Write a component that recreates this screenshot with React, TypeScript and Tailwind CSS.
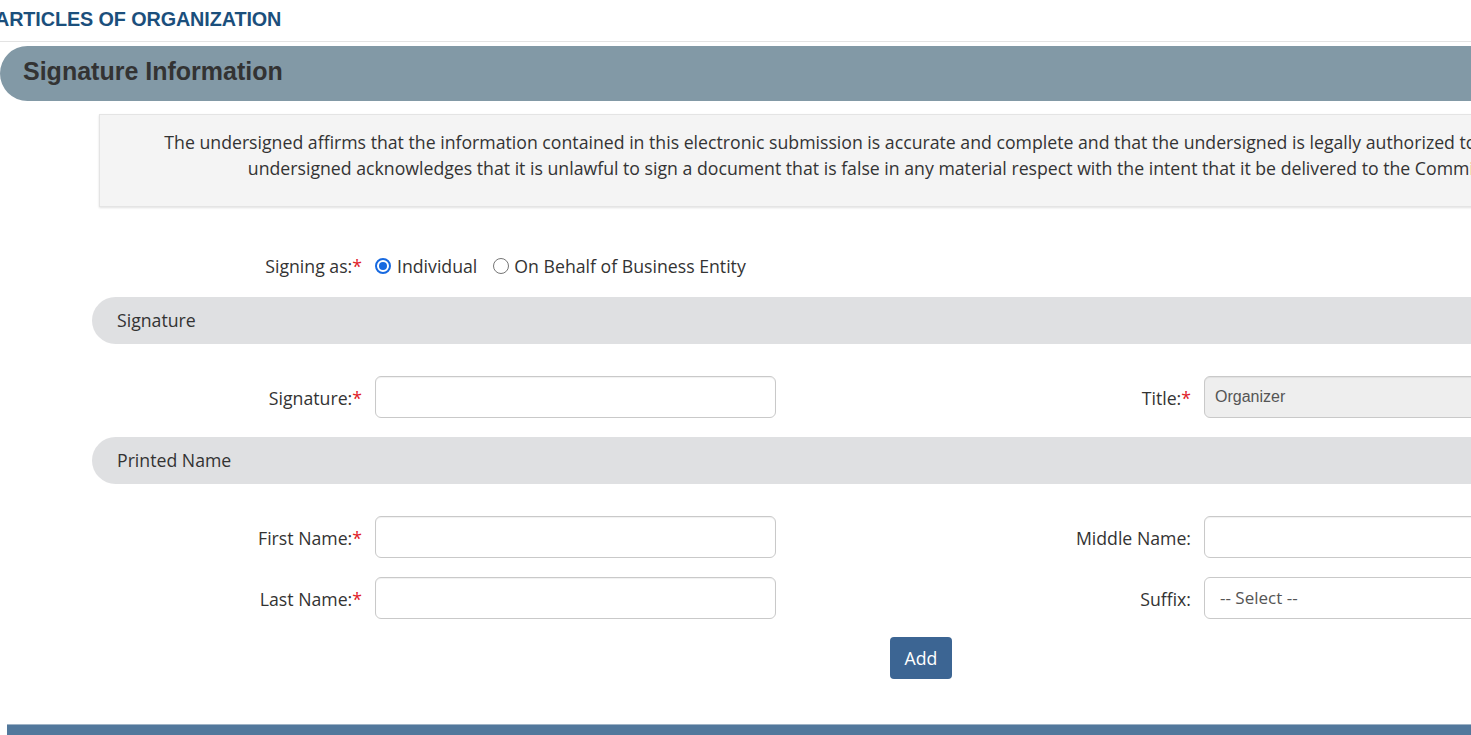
import React from "react";

const seg = { fontFamily: '"Open Sans", "Noto Sans", sans-serif' };
const arial = { fontFamily: '"Liberation Sans", Arial, sans-serif' };

function Req() {
  return <span className="text-[#e0202a]">*</span>;
}

function Field({
  label,
  req,
  children,
  labelW,
}: {
  label: string;
  req?: boolean;
  children?: React.ReactNode;
  labelW: string;
}) {
  return (
    <div className="flex items-center">
      <div className={`${labelW} text-right text-[#333] text-[17.7px] pr-[13px] pt-[2px]`} style={seg}>
        {label}
        {req ? <Req /> : null}
      </div>
      {children}
    </div>
  );
}

function Input({ value, disabled }: { value?: string; disabled?: boolean }) {
  return (
    <div
      className={`h-[42px] rounded-[6px] border border-[#c9c9c9] shadow-[inset_0_1px_1px_rgba(0,0,0,0.06)] flex items-center ${
        disabled ? "bg-[#eeeeee]" : "bg-white"
      } w-[401px]`}
    >
      {value ? (
        <span className="pl-[10px] text-[16px] text-[#555]" style={arial}>
          {value}
        </span>
      ) : null}
    </div>
  );
}

export default function App() {
  return (
    <div className="w-[1471px] h-[735px] overflow-hidden bg-white">
      <div className="w-[1760px]">
        <div className="h-[42px] border-b border-[#e3e3e3] flex items-start pt-[5px]">
          <div
            className="ml-[-5px] text-[19.8px] font-bold text-[#1b4f7c] tracking-[-0.1px]"
            style={arial}
          >
            ARTICLES OF ORGANIZATION
          </div>
        </div>
        <div className="mt-[4px] h-[55px] rounded-l-[28px] bg-[#8299a6] flex items-center pl-[23px] pb-[3px]">
          <span className="text-[25px] font-bold text-[#333]" style={arial}>
            Signature Information
          </span>
        </div>

        <div className="ml-[92px] w-[1658px]">
          <div
            className="mt-[13px] ml-[7px] mr-[7px] h-[93px] bg-[#f4f4f4] border border-[#e4e4e4] shadow-[0_1px_2px_rgba(0,0,0,0.12)] pt-[14px] px-[20px] text-center text-[17.7px] leading-[26px] text-[#333]"
            style={seg}
          >
            The undersigned affirms that the information contained in this electronic submission is accurate and complete and that the undersigned is legally authorized to sign this document. The undersigned acknowledges that it is unlawful to sign a document that is false in any material respect with the intent that it be delivered to the Commission for filing.
          </div>

          <div className="mt-[46px] h-[26px] flex items-center text-[17.7px] text-[#333]" style={seg}>
            <div className="w-[283px] text-right pr-[13px]">
              Signing as:
              <Req />
            </div>
            <label className="flex items-center">
              <span className="w-[16px] h-[16px] rounded-full border-[2px] border-[#1769e0] flex items-center justify-center mr-[6px]">
                <span className="w-[8px] h-[8px] rounded-full bg-[#1769e0]" />
              </span>
              Individual
            </label>
            <label className="flex items-center ml-[16px]">
              <span className="w-[16px] h-[16px] rounded-full border border-[#767676] mr-[5px]" />
              On Behalf of Business Entity
            </label>
          </div>

          <div className="mt-[18px] h-[47px] rounded-l-[24px] bg-[#dfe0e2] flex items-center pl-[25px] text-[17.7px] text-[#333]" style={seg}>
            Signature
          </div>

          <div className="mt-[32px] flex">
            <Field label="Signature:" req labelW="w-[283px]">
              <Input />
            </Field>
            <Field label="Title:" req labelW="w-[428px]">
              <Input value="Organizer" disabled />
            </Field>
          </div>

          <div className="mt-[19px] h-[47px] rounded-l-[24px] bg-[#dfe0e2] flex items-center pl-[25px] text-[17.7px] text-[#333]" style={seg}>
            Printed Name
          </div>

          <div className="mt-[32px] flex">
            <Field label="First Name:" req labelW="w-[283px]">
              <Input />
            </Field>
            <Field label="Middle Name:" labelW="w-[428px]">
              <Input />
            </Field>
          </div>
          <div className="mt-[19px] flex">
            <Field label="Last Name:" req labelW="w-[283px]">
              <Input />
            </Field>
            <Field label="Suffix:" labelW="w-[428px]">
              <div className="h-[42px] w-[401px] rounded-[6px] border border-[#c9c9c9] bg-white flex items-center pl-[15px] text-[17px] text-[#555]" style={seg}>
                -- Select --
              </div>
            </Field>
          </div>

          <div className="mt-[18px] flex justify-center">
            <button
              className="h-[42px] w-[62px] rounded-[4px] bg-[#3c6593] text-white text-[17.7px]"
              style={seg}
            >
              Add
            </button>
          </div>
        </div>

        <div className="mt-[45px] ml-[7px] h-[20px] bg-[#52789c] border-t border-[#9fb3c6]" />
      </div>
    </div>
  );
}
